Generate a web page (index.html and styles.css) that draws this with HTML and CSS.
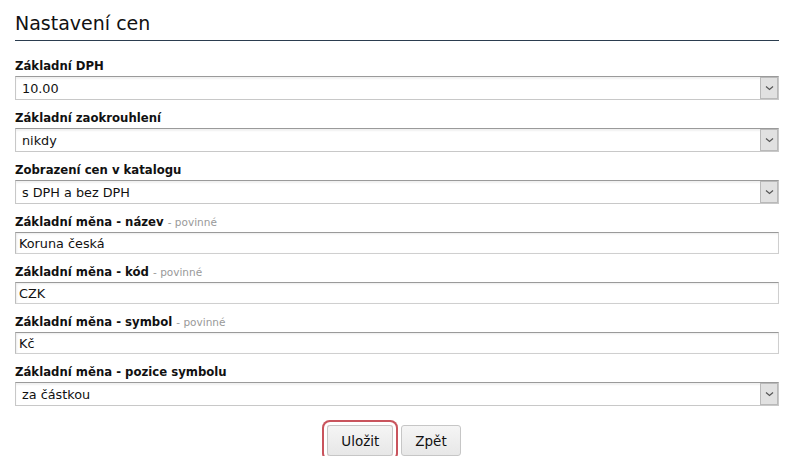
FILE: index.html
```html
<!DOCTYPE html>
<html lang="cs">
<head>
<meta charset="utf-8">
<title>Nastavení cen</title>
<link rel="stylesheet" href="styles.css">
</head>
<body>
<div class="page">
  <h1 class="title">Nastavení cen</h1>
  <form class="form">
    <div class="field">
      <label class="label">Základní DPH</label>
      <div class="select-wrap">
        <select class="select"><option>10.00</option></select>
        <span class="arrow"><svg width="9" height="6" viewBox="0 0 9 6"><path d="M1 1.5 L4.5 4.5 L8 1.5" fill="none" stroke="#555" stroke-width="1.2"/></svg></span>
      </div>
    </div>
    <div class="field">
      <label class="label">Základní zaokrouhlení</label>
      <div class="select-wrap">
        <select class="select"><option>nikdy</option></select>
        <span class="arrow"><svg width="9" height="6" viewBox="0 0 9 6"><path d="M1 1.5 L4.5 4.5 L8 1.5" fill="none" stroke="#555" stroke-width="1.2"/></svg></span>
      </div>
    </div>
    <div class="field">
      <label class="label">Zobrazení cen v katalogu</label>
      <div class="select-wrap">
        <select class="select"><option>s DPH a bez DPH</option></select>
        <span class="arrow"><svg width="9" height="6" viewBox="0 0 9 6"><path d="M1 1.5 L4.5 4.5 L8 1.5" fill="none" stroke="#555" stroke-width="1.2"/></svg></span>
      </div>
    </div>
    <div class="field">
      <label class="label">Základní měna - název <span class="req">- povinné</span></label>
      <input class="input" type="text" value="Koruna česká">
    </div>
    <div class="field">
      <label class="label">Základní měna - kód <span class="req">- povinné</span></label>
      <input class="input" type="text" value="CZK">
    </div>
    <div class="field">
      <label class="label">Základní měna - symbol <span class="req">- povinné</span></label>
      <input class="input" type="text" value="Kč">
    </div>
    <div class="field">
      <label class="label">Základní měna - pozice symbolu</label>
      <div class="select-wrap">
        <select class="select"><option>za částkou</option></select>
        <span class="arrow"><svg width="9" height="6" viewBox="0 0 9 6"><path d="M1 1.5 L4.5 4.5 L8 1.5" fill="none" stroke="#555" stroke-width="1.2"/></svg></span>
      </div>
    </div>
    <div class="actions">
      <button type="button" class="btn btn-focus">Uložit</button>
      <button type="button" class="btn">Zpět</button>
    </div>
  </form>
</div>
</body>
</html>
```
FILE: styles.css
```css
html, body {
  margin: 0;
  padding: 0;
  background: #fff;
}
body {
  font-family: "DejaVu Sans", Verdana, sans-serif;
  color: #111;
}
.page {
  width: 764px;
  padding: 0 0 0 15px;
}
.title {
  margin: 0;
  padding-top: 10px;
  height: 30px;
  font-size: 19px;
  font-weight: normal;
  line-height: 26px;
  border-bottom: 1px solid #2b3d4f;
  color: #111;
}
.form {
  padding-top: 15px;
}
.field {
  display: flex;
  flex-direction: column;
  margin-bottom: 8px;
}
.label {
  font-size: 11.7px;
  font-weight: bold;
  line-height: 20px;
  color: #111;
}
.req {
  font-weight: normal;
  font-size: 10.5px;
  color: #999;
}
.select-wrap {
  position: relative;
  height: 24px;
}
.select {
  appearance: none;
  -webkit-appearance: none;
  width: 100%;
  height: 24px;
  margin: 0;
  padding: 0 0 0 6px;
  font-family: "DejaVu Sans", Verdana, sans-serif;
  font-size: 12.8px;
  color: #111;
  background: #fff;
  border: 1px solid #c8c8c8;
  border-top-color: #9a9a9a;
  box-shadow: inset 0 2px 2px rgba(0,0,0,0.06);
  border-radius: 0;
  outline: none;
}
.arrow {
  position: absolute;
  top: 1px;
  right: 1px;
  width: 16px;
  height: 20px;
  background: #e1e1e1;
  border: 1px solid #b9b9b9;
  display: flex;
  align-items: center;
  justify-content: center;
  pointer-events: none;
}
.input {
  box-sizing: border-box;
  width: 100%;
  height: 22px;
  margin: 0;
  padding: 0 0 0 3px;
  font-family: "DejaVu Sans", Verdana, sans-serif;
  font-size: 12.8px;
  color: #111;
  background: #fff;
  border: 1px solid #cfcfcf;
  border-top-color: #9a9a9a;
  border-left-color: #bdbdbd;
  box-shadow: inset 1px 1px 2px rgba(0,0,0,0.08);
  border-radius: 0;
  outline: none;
}
.actions {
  display: flex;
  justify-content: center;
  gap: 8px;
  padding-top: 11px;
  padding-right: 6px;
}
.btn {
  height: 31px;
  padding: 0 13px;
  font-family: "DejaVu Sans", Verdana, sans-serif;
  font-size: 13.5px;
  color: #111;
  background: linear-gradient(#f5f5f5, #e7e7e7);
  border: 1px solid #c6c6c6;
  border-radius: 3px;
}
.btn-focus {
  box-shadow: 0 0 0 3px #fff, 0 0 0 5px #c9545d;
}
```
